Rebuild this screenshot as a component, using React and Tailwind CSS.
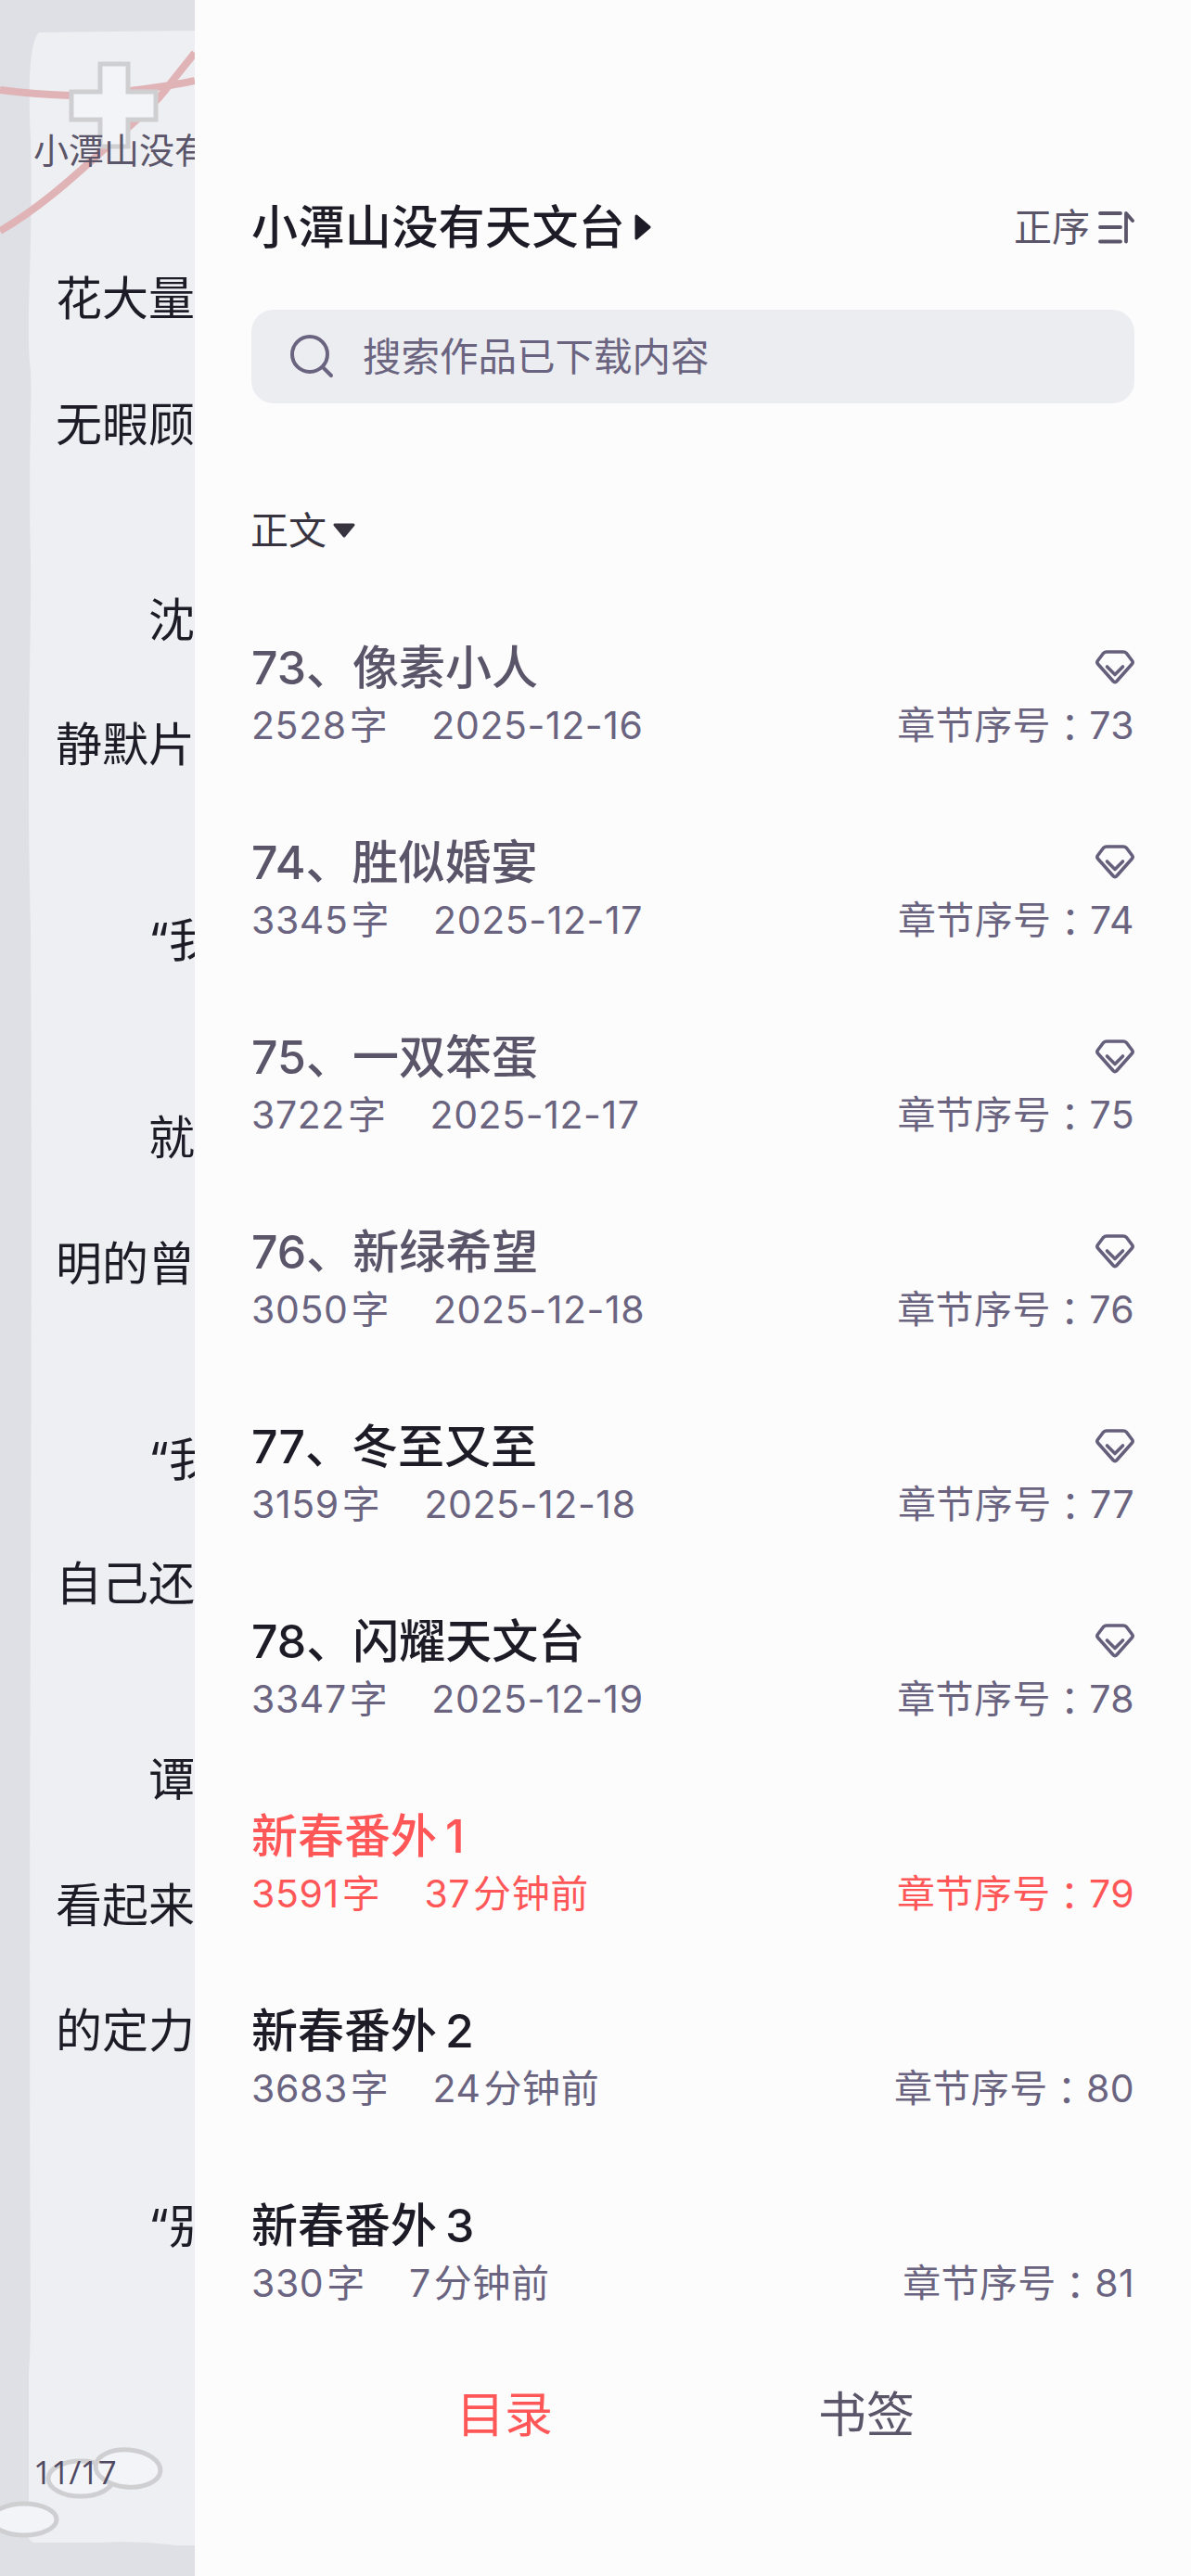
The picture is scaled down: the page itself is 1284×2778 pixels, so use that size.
import React from "react";

const rows = [
  { t: "73、像素小人", w: "2528", d: "2025-12-16", n: 73, c: "gray", gem: true },
  { t: "74、胜似婚宴", w: "3345", d: "2025-12-17", n: 74, c: "gray", gem: true },
  { t: "75、一双笨蛋", w: "3722", d: "2025-12-17", n: 75, c: "gray", gem: true },
  { t: "76、新绿希望", w: "3050", d: "2025-12-18", n: 76, c: "gray", gem: true },
  { t: "77、冬至又至", w: "3159", d: "2025-12-18", n: 77, c: "dark", gem: true },
  { t: "78、闪耀天文台", w: "3347", d: "2025-12-19", n: 78, c: "dark", gem: true },
  { t: "新春番外", s: "1", w: "3591", a: "37", d: "分钟前", n: 79, c: "red" },
  { t: "新春番外", s: "2", w: "3683", a: "24", d: "分钟前", n: 80, c: "dark" },
  { t: "新春番外", s: "3", w: "330", a: "7", d: "分钟前", n: 81, c: "dark" },
];

function Gem() {
  return (
    <svg width="42" height="38" viewBox="0 0 42 38" fill="none" stroke="#655f7c" strokeWidth="3.6" strokeLinecap="round" strokeLinejoin="round" className="shrink-0">
      <path d="M12 2H30Q32 2 33.500 3.500L39.500 11.500Q41 13.500 39 15.500L23 33.500Q21 35.800 19 33.500L3 15.500Q1 13.500 2.500 11.500L8.500 3.500Q10 2 12 2Z" />
      <path d="M12.500 18L21 26.500L29.500 18" />
    </svg>
  );
}

function Row({ r }) {
  const title = r.c === "gray" ? "text-[#5a5569]" : r.c === "red" ? "text-[#ff5757]" : "text-[#1d1b26]";
  const sub = r.c === "red" ? "text-[#ff5757]" : "text-[#6a6480]";
  return (
    <div className="flex flex-col gap-[7px]">
      <div className="flex items-center justify-between h-[60px]">
        <span className={`text-[50px] leading-[60px] font-medium ${title}`}>
          {r.t}
          {r.s && <span className="ml-[9px]">{r.s}</span>}
        </span>
        {r.gem && <Gem />}
      </div>
      <div className={`flex items-center justify-between h-[50px] text-[41px] leading-[50px] ${sub}`}>
        <div className="flex gap-[47px] tracking-[0.6px]">
          <span>{r.w}<span className="ml-[3px]">字</span></span>
          <span>{r.a && <span className="mr-[3px]">{r.a}</span>}{r.d}</span>
        </div>
        <span className="flex items-center h-[50px] tracking-[0.4px]">章节序号<span className="leading-none font-['Noto_Sans_CJK_TC',sans-serif]">：</span>{r.n}</span>
      </div>
    </div>
  );
}

function Art() {
  return (
    <svg width="210" height="2778" viewBox="0 0 210 2778" className="absolute left-0 top-0" fill="none">
      <path d="M42 35 L210 33 V2745 L190 2745 C150 2740 120 2741 110 2742 L40 2742 C32 2742 30 2738 31 2730 L31 2560 C32 2540 33 2530 32 2552 L33 2500 C30 1900 36 1500 33 1000 C28 800 34 700 33 600 C30 480 36 420 32 390 C28 340 36 260 33 150 C30 90 32 45 42 35 Z" fill="#eeeff3" />
      <path d="M0 97 C30 101 50 102 76 103 M140 98 C165 95 190 92 210 87" stroke="#e0b4b6" strokeWidth="8" />
      <path d="M0 249 C40 226 75 195 110 163 C140 136 170 110 182 92 L210 57" stroke="#e0b4b6" strokeWidth="8" />
      <path d="M108 69 H138 V99 H168 V129 H138 V158 H108 V129 H77 V99 H108 Z" fill="#f3f4f8" stroke="#cfcfd2" strokeWidth="5" />
      <ellipse cx="87" cy="2673" rx="35" ry="19" fill="#f3f4f8" stroke="#cfcfd2" strokeWidth="5" />
      <ellipse cx="138" cy="2662" rx="35" ry="20" fill="#f3f4f8" stroke="#cfcfd2" strokeWidth="5" transform="rotate(5 138 2662)" />
      <ellipse cx="26" cy="2717" rx="35" ry="17" fill="#f3f4f8" stroke="#cfcfd2" strokeWidth="5" />
    </svg>
  );
}

const lines = [
  { t: "花大量", mt: 292 },
  { t: "无暇顾", mt: 76 },
  { t: "沈", mt: 151, i: 1 },
  { t: "静默片", mt: 74 },
  { t: "“我", mt: 151, i: 1 },
  { t: "就", mt: 153, i: 1 },
  { t: "明的曾", mt: 76 },
  { t: "“我", mt: 151, i: 1 },
  { t: "自己还", mt: 74 },
  { t: "谭", mt: 151, i: 1 },
  { t: "看起来", mt: 76 },
  { t: "的定力", mt: 75 },
  { t: "“别", mt: 151, i: 1 },
];

export default function App() {
  return (
    <div className="flex w-[1284px] h-[2778px] overflow-hidden font-['Inter','Noto_Sans_CJK_SC',sans-serif]">
      <div className="relative w-[210px] shrink-0 h-full overflow-hidden bg-[#dfe0e5]">
        <Art />
        <div className="relative flex flex-col pl-[60px] whitespace-nowrap text-[50px] leading-[60px] text-[#1d1b26]">
          {lines.map((l, i) => (
            <div key={i} className={l.i ? "pl-[100px]" : ""} style={{ marginTop: l.mt }}>{l.t}</div>
          ))}
        </div>
        <div className="absolute left-[36px] top-[139px] whitespace-nowrap text-[38px] leading-[46px] text-[#5a5569]">小潭山没有天文台</div>
        <div className="absolute left-[36px] top-[2643px] font-['Open_Sans',sans-serif] text-[35px] leading-[46px] tracking-[-0.8px] text-[#4f4a62]">11/17</div>
      </div>

      <div className="flex-1 h-full bg-[#fcfcfd] px-[61px] pt-[215px] flex flex-col">
        <div className="flex items-center justify-between h-[60px]">
          <div className="flex items-center gap-[9px]">
            <span className="text-[50px] leading-[60px] font-medium tracking-[0.4px] text-[#1d1b26]">小潭山没有天文台</span>
            <svg width="20" height="30" viewBox="0 0 20 30" fill="#1d1b26" stroke="#1d1b26" strokeWidth="3" strokeLinejoin="round"><path d="M3 3 L17 15 L3 27 Z" /></svg>
          </div>
          <div className="flex items-center gap-[9px]">
            <span className="text-[41px] leading-[50px] text-[#5a5569]">正序</span>
            <svg width="39" height="36" viewBox="0 0 39 36" fill="none" stroke="#5a5569" strokeWidth="3.800" strokeLinecap="round" strokeLinejoin="round">
              <path d="M2 3h22M2 18h22M2 33.500h22" />
              <path d="M30 33.500V3l7 8" />
            </svg>
          </div>
        </div>

        <div className="mt-[59px] h-[101px] rounded-[24px] bg-[#ecedf1] flex items-center pl-[42px] gap-[30px]">
          <svg width="48" height="48" viewBox="0 0 48 48" fill="none" stroke="#6a6480" strokeWidth="4" strokeLinecap="round" className="shrink-0">
            <circle cx="21" cy="21" r="19" />
            <path d="M35 35l9 9" />
          </svg>
          <span className="text-[41.500px] leading-[50px] text-[#6a6480]">搜索作品已下载内容</span>
        </div>

        <div className="mt-[112px] -ml-px h-[50px] flex items-center gap-[6px]">
          <span className="text-[41px] leading-[50px] text-[#37333f]">正文</span>
          <svg width="26" height="18" viewBox="0 0 26 18" fill="#37333f" stroke="#37333f" strokeWidth="3" strokeLinejoin="round"><path d="M3 3h20L13 15z" /></svg>
        </div>

        <div className="mt-[93px] flex flex-col gap-[93px]">
          {rows.map((r) => <Row key={r.n} r={r} />)}
        </div>

        <div className="mt-[88px] h-[60px] flex justify-center gap-[286px] pr-[16px] text-[52px] leading-[60px]">
          <span className="text-[#ff5757]">目录</span>
          <span className="text-[#5a5569]">书签</span>
        </div>
      </div>
    </div>
  );
}
